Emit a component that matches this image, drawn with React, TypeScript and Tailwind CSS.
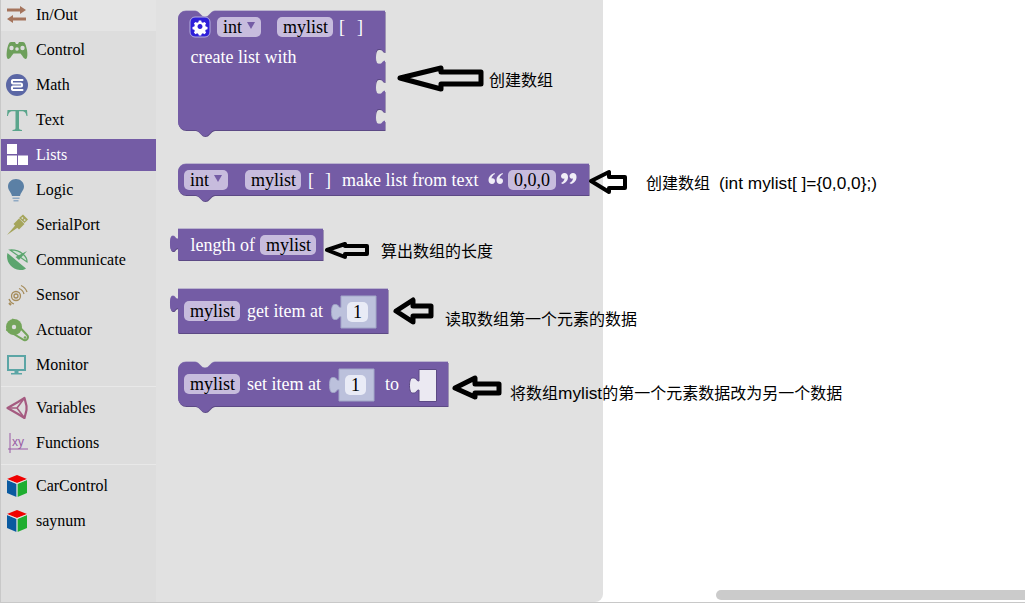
import React from "react";

const Notch = "c 2,0 3,1 4,2 l 2,2 c 1,1 2,2 4,2 s 3,-1 4,-2 l 2,-2 c 1,-1 2,-2 4,-2";
const NotchRev = "c -2,0 -3,1 -4,2 l -2,2 c -1,1 -2,2 -4,2 s -3,-1 -4,-2 l -2,-2 c -1,-1 -2,-2 -4,-2";
const Tab = "c -1.5,0 -2.5,-1 -3,-2 c -.5,-1 -2,-1 -3.5,-1 c -2,0 -3,3 -3,7.5 c 0,4.5 1,7.5 3,7.5 c 1.5,0 3,0 3.5,-1 c .5,-1 1.5,-2 3,-2";
const TabUp = "c -1.5,0 -2.5,1 -3,2 c -.5,1 -1.5,1 -2.5,1 c -1.5,0 -2.5,-3 -2.5,-7.5 c 0,-4.5 1,-7.5 2.5,-7.5 c 1,0 2,0 2.5,1 c .5,1 1.5,2 3,2";

function blockPath(o: { l: number; t: number; r: number; b: number; round?: boolean; top?: boolean; bottom?: boolean; output?: boolean; notches?: number[] }) {
  const { l, t, r, b, round, top, bottom, output, notches = [] } = o;
  let d = round ? `M ${l},${t + 8} a 8,8 0 0 1 8,-8` : `M ${l},${t}`;
  if (top) d += ` H ${l + 17} ${Notch}`;
  d += ` H ${r}`;
  notches.forEach((y) => {
    d += ` V ${y} ${Tab}`;
  });
  d += ` V ${b}`;
  if (bottom) d += ` H ${l + 37} ${NotchRev}`;
  d += round ? ` H ${l + 8} a 8,8 0 0 1 -8,-8` : ` H ${l}`;
  if (output) d += ` V ${t + 19} ${TabUp}`;
  return d + " Z";
}

function Block(p: Parameters<typeof blockPath>[0]) {
  const d = blockPath(p);
  return (
    <g>
      <path d={d} transform="translate(0.5,1)" className="fill-[#5c4985]" />
      <path d={d} transform="translate(0,-0.5)" className="fill-[#9485bb]" />
      <path d={d} className="fill-[#745ca5]" />
    </g>
  );
}

function Label({ x, y, children }: { x: number; y: number; children: React.ReactNode }) {
  return (
    <text x={x} y={y + 1} xmlSpace="preserve" className="fill-white font-['Liberation_Serif',serif] text-[18px]">
      {children}
    </text>
  );
}

function Field({ x, y, w, label, h = 20 }: { x: number; y: number; w: number; label: string; h?: number }) {
  return (
    <g>
      <rect x={x} y={y} width={w} height={h} rx={5} className="fill-[#c7bcdd]" />
      <text x={x + 6} y={y + 16} className="fill-black font-['Liberation_Serif',serif] text-[18px]">
        {label}
      </text>
    </g>
  );
}

function Dropdown({ x, y }: { x: number; y: number }) {
  return (
    <g>
      <rect x={x} y={y} width={44} height={20} rx={5} className="fill-[#c7bcdd]" />
      <text x={x + 6} y={y + 16} className="fill-black font-['Liberation_Serif',serif] text-[18px]">
        int
      </text>
      <path d={`M ${x + 30},${y + 5} h 8 l -4,7 z`} className="fill-[#745ca5]" />
    </g>
  );
}

function NumberInput({ x, top, label = "1" }: { x: number; top: number; label?: string }) {
  const d = `M ${x + 35},${top} H ${x} V ${top + 11.5} ${Tab} V ${top + 32} H ${x + 35} Z`;
  return (
    <g>
      <path d={d} className="fill-[#bcc1dc] stroke-[#a2a7c8]" />
      <rect x={x + 6} y={top + 6} width={21} height={20} rx={5} className="fill-[#e9ebf6]" />
      <text x={x + 12} y={top + 22} className="fill-black font-['Liberation_Serif',serif] text-[18px]">
        {label}
      </text>
    </g>
  );
}

function Arrow({ pts, w = 4 }: { pts: string; w?: number }) {
  return <polygon points={pts} fill="none" stroke="#000" strokeWidth={w} strokeLinejoin="round" />;
}

function Note({ x, y, children }: { x: number; y: number; children: React.ReactNode }) {
  return (
    <text
      x={x}
      y={y}
      xmlSpace="preserve"
      className="fill-black font-['Liberation_Sans','Noto_Sans_CJK_SC',sans-serif] text-[16px]"
    >
      {children}
    </text>
  );
}

const Cube = () => (
  <svg width="24" height="24" viewBox="0 0 24 24">
    <path d="M1 5 L11 1 L21 5 L11 9 Z" fill="#f00000" />
    <path d="M1 6 L10.5 10 V23 L1 19 Z" fill="#0a5aa0" />
    <path d="M11.5 10 L21 6 V19 L11.5 23 Z" fill="#1fae30" />
    <path d="M1 5.5 L11 9.5 L21 5.5 M11 9.5 V23" fill="none" stroke="#e8e8e8" strokeWidth="0.6" />
  </svg>
);

const icons: Record<string, React.ReactNode> = {
  "In/Out": (
    <svg width="24" height="24" viewBox="0 0 24 24" fill="#a5745c">
      <path d="M1 5.5 H14 V3 L20 7 L14 11 V8.5 H1 Z" />
      <path d="M20 14.5 H7 V12 L1 16 L7 20 V17.5 H20 Z" />
    </svg>
  ),
  Control: (
    <svg width="24" height="24" viewBox="0 0 24 24">
      <path
        d="M5 4 H9 L10 6 H12 L13 4 H17 C19 4 20 7 21 12 C21.6 16 21.6 20 20 21 C18 21.5 16 17 14.5 15.5 H7.5 C6 17 4 21.5 2 21 C0.4 20 0.4 16 1 12 C2 7 3 4 5 4 Z"
        fill="#6d9f5b"
      />
      <circle cx="5.5" cy="10" r="2.2" fill="#dddddd" />
      <circle cx="16.5" cy="10" r="2.2" fill="#dddddd" />
      <circle cx="11" cy="11" r="1.8" fill="#dddddd" />
    </svg>
  ),
  Math: (
    <svg width="24" height="24" viewBox="0 0 24 24">
      <circle cx="11" cy="12" r="11" fill="#5b67a5" />
      <path d="M16.5 7 H7 C5.5 7 5.5 10.5 7 10.5 H15 M15 10.5 C16.5 10.5 16.5 13.5 15 13.5 H7 C5.5 13.5 5.5 17 7 17 H16.5" fill="none" stroke="#fff" strokeWidth="2" strokeLinecap="round" />
    </svg>
  ),
  Text: (
    <svg width="24" height="24" viewBox="0 0 24 24" fill="#5ba58c">
      <path d="M1.5 2 H21 L21.5 8 H20.5 C20 5 19 3.3 15.5 3.3 H13 V20 C13 21.6 14 21.8 16 22 V23 H6.5 V22 C8.5 21.8 9.5 21.6 9.5 20 V3.3 H7 C3.5 3.3 2.5 5 2 8 H1 Z" />
    </svg>
  ),
  Lists: (
    <svg width="24" height="24" viewBox="0 0 24 24" fill="#fff">
      <rect x="1" y="1" width="10" height="10" />
      <rect x="1" y="12.5" width="10" height="9.5" />
      <rect x="12" y="12.5" width="10" height="9.5" />
    </svg>
  ),
  Logic: (
    <svg width="24" height="24" viewBox="0 0 24 24">
      <path d="M10 1 C14.5 1 18 4.2 18 8.5 C18 12 15 14 14 18 H6 C5 14 2 12 2 8.5 C2 4.2 5.5 1 10 1 Z" fill="#5b80a5" />
      <path d="M6.5 19.5 H13.5 V21 H6.5 Z M7.5 22 H12.5 V23.5 H7.5 Z" fill="#8fa9c4" />
    </svg>
  ),
  SerialPort: (
    <svg width="24" height="24" viewBox="0 0 24 24">
      <path d="M1 22 L10 11.5 L12.5 14 Z" fill="#a5a55b" />
      <path d="M7.5 11 L13 5.5 L18.5 11 L13 16.5 Z" fill="#a5a55b" />
      <path d="M13 5 L17 1.5 L22 6.5 L18.5 10 Z" fill="#a5a55b" />
      <rect x="15.5" y="4" width="1.6" height="1.6" fill="#dddddd" transform="rotate(45 16 5)" />
      <rect x="18" y="6.5" width="1.6" height="1.6" fill="#dddddd" transform="rotate(45 19 7)" />
    </svg>
  ),
  Communicate: (
    <svg width="24" height="24" viewBox="0 0 24 24" fill="#5ba56e">
      <path d="M1.5 5 C-0.5 12 4 21 14 22 C17 22.3 19 21.5 20 20.5 L11 13 Z" />
      <path d="M4 2 L21 14 C21.5 9 15 1.5 4 2 Z" fill="#cfe0d4" stroke="#5ba56e" strokeWidth="1.2" />
      <path d="M21 3 L13 12 L9.5 9 Z" />
    </svg>
  ),
  Sensor: (
    <svg width="24" height="24" viewBox="0 0 24 24" fill="none" stroke="#a58c5b" strokeWidth="1.3">
      <circle cx="10" cy="13" r="2" />
      <circle cx="10" cy="13" r="4.5" />
      <path d="M13 5.5 A8 8 0 0 1 18 11 M15 2.5 A11 11 0 0 1 21 9" />
      <path d="M3 16 A8 8 0 0 0 8 21" />
      <path d="M3 20 L5 22" strokeWidth="2" />
    </svg>
  ),
  Actuator: (
    <svg width="24" height="24" viewBox="0 0 24 24">
      <path d="M7 2 L21 17 A3 3 0 0 1 18 22 L1 12 Z" fill="none" stroke="#74a55b" strokeWidth="2" />
      <circle cx="8" cy="9" r="8" fill="#74a55b" />
      <circle cx="8" cy="9" r="2.2" fill="#dddddd" />
      <circle cx="19" cy="19.5" r="1.3" fill="#74a55b" />
    </svg>
  ),
  Monitor: (
    <svg width="24" height="24" viewBox="0 0 24 24">
      <path d="M1 2 H20 V18 H1 Z M3 4 V16 H18 V4 Z" fill="#5ba5a5" fillRule="evenodd" />
      <path d="M8.5 18 H12.5 V20 H16 V21.5 H5 V20 H8.5 Z" fill="#5ba5a5" />
    </svg>
  ),
  Variables: (
    <svg width="24" height="24" viewBox="0 0 24 24" fill="none" stroke="#a55b80" strokeWidth="2.2" strokeLinejoin="round">
      <path d="M1.5 12 L12 6 L18.5 2 L20.5 10 V14 L18.5 22 L12 18 Z" />
      <path d="M2 12 H11 L18.5 2 M11 12 L18.5 22" strokeWidth="1.6" />
    </svg>
  ),
  Functions: (
    <svg width="24" height="24" viewBox="0 0 24 24">
      <path d="M4 2 V22 M2 18 H22" stroke="#995ba5" strokeWidth="1" fill="none" />
      <text x="6" y="15" fill="#995ba5" className="font-['Liberation_Sans',sans-serif] text-[12px]">
        xy
      </text>
    </svg>
  ),
  CarControl: <Cube />,
  saynum: <Cube />,
};

function Row({ name, active }: { name: string; active?: boolean }) {
  const tone = active ? "bg-[#745ca5] text-white" : name === "In/Out" ? "bg-[#e4e4e4] text-black" : "text-black";
  return (
    <div className={`mb-[3px] flex h-[32px] items-center pl-[5px] font-['Liberation_Serif',serif] text-[16px] ${tone}`}>
      <span className="flex h-6 w-6 shrink-0 items-center justify-center">{icons[name]}</span>
      <span className="ml-[6px]">{name}</span>
    </div>
  );
}

const Sep = () => <div className="mb-[5px] mt-[5px] h-px bg-[#e8e8e8]" />;

export default function App() {
  return (
    <div className="relative flex h-[606px] w-[1025px] flex-col overflow-hidden bg-white">
      <div className="flex h-[602px] shrink-0">
        <div className="-mt-px w-[156px] shrink-0 border-l border-[#c8c8c8] bg-[#dddddd]">
          {["In/Out", "Control", "Math", "Text"].map((n) => (
            <Row key={n} name={n} />
          ))}
          <Row name="Lists" active />
          {["Logic", "SerialPort", "Communicate", "Sensor", "Actuator", "Monitor"].map((n) => (
            <Row key={n} name={n} />
          ))}
          <Sep />
          <Row name="Variables" />
          <Row name="Functions" />
          <Sep />
          <Row name="CarControl" />
          <Row name="saynum" />
        </div>
        <div className="w-[447px] shrink-0 rounded-br-lg bg-[#e1e1e1]" />
      </div>
      <div className="h-px bg-[#c8c8c8]" />

      <svg width="1025" height="606" viewBox="0 0 1025 606" className="absolute left-0 top-0">
        {/* create list */}
        <Block l={178} t={11} r={385} b={130} round top bottom notches={[52, 82, 112]} />
        <rect x={190} y={17} width={20} height={20} rx={5} fill="#2e1fd9" stroke="#b5aee0" strokeWidth="1" />
        <g fill="#fff">
          <path
            fillRule="evenodd"
            d="M198.8 21 h2.4 l.4 1.7 1.3 .6 1.6 -.9 1.6 1.7 -.9 1.5 .5 1.3 1.8 .5 v2.4 l-1.8 .4 -.5 1.3 .9 1.6 -1.6 1.6 -1.6 -.9 -1.3 .6 -.4 1.6 h-2.4 l-.4 -1.6 -1.3 -.6 -1.6 .9 -1.6 -1.6 .9 -1.6 -.5 -1.3 -1.8 -.4 v-2.4 l1.8 -.5 .5 -1.3 -.9 -1.5 1.6 -1.7 1.6 .9 1.3 -.6 z M200 24.5 a 2.5 2.5 0 1 0 .01 0 z"
            transform="translate(0,-.5)"
          />
        </g>
        <Dropdown x={217} y={17} />
        <Field x={277} y={17} w={56} label="mylist" />
        <Label x={339} y={32}>[</Label>
        <Label x={357} y={32}>]</Label>
        <Label x={190.5} y={62}>create list with</Label>

        {/* make list from text */}
        <Block l={178} t={164} r={589} b={195} round bottom />
        <Dropdown x={184} y={170} />
        <Field x={245} y={170} w={56} label="mylist" />
        <Label x={308} y={185}>[</Label>
        <Label x={325} y={185}>]</Label>
        <Label x={342} y={185}>make list from text</Label>
        <g className="fill-[#f0edf7]">
          <path d="M494.5 173 C490.5 174.5 488.5 177 488.5 180 C488.5 182.5 490 184 492 184 C494 184 495 182.5 495 181 C495 179 493.5 178 491.5 178.5 C491.8 176.5 493 175 495 174 Z" />
          <path d="M502.5 173 C498.5 174.5 496.5 177 496.5 180 C496.5 182.5 498 184 500 184 C502 184 503 182.5 503 181 C503 179 501.5 178 499.5 178.5 C499.8 176.5 501 175 503 174 Z" />
          <path d="M562.5 184 C566.5 182.5 568 180 568 177 C568 174.5 566.5 173 564.5 173 C562.5 173 561 174.5 561 176 C561 178 562.5 179 564.5 178.5 C564.2 180.5 563 182 561 183 Z" />
          <path d="M571 184 C575 182.5 576.5 180 576.5 177 C576.5 174.5 575 173 573 173 C571 173 569.5 174.5 569.5 176 C569.5 178 571 179 573 178.5 C572.7 180.5 571.5 182 569.5 183 Z" />
        </g>
        <Field x={508} y={170} w={48} label="0,0,0" />

        {/* length of */}
        <Block l={178} t={229} r={323} b={260} output />
        <Label x={190.5} y={250}>length of</Label>
        <Field x={260} y={235} w={56} label="mylist" />

        {/* get item */}
        <Block l={178} t={289} r={388} b={333} output />
        <Field x={184} y={301} w={56} label="mylist" />
        <Label x={247} y={316}>get item at</Label>
        <NumberInput x={341} top={296} />

        {/* set item */}
        <Block l={178} t={362} r={448} b={406} round top bottom />
        <Field x={184} y={374} w={56} label="mylist" />
        <Label x={247} y={389}>set item at</Label>
        <NumberInput x={339} top={369} />
        <Label x={385} y={389}>to</Label>
        <path
          d={`M 436.5,369.5 H 419 V 381 ${Tab} V 401.5 H 436.5 Z`}
          className="fill-[#ebe9f2] stroke-[#5c4985]"
        />

        {/* annotation arrows */}
        <Arrow pts="400,78 441,68 441,72 481,72 481,84 441,84 441,89" w={5} />
        <Arrow pts="591,181 609,172 609,177 625,177 625,188 609,188 609,192" w={4} />
        <Arrow pts="327,250 345,244 345,246 367,246 367,254 345,254 345,257" w={4} />
        <Arrow pts="396,311 413,300 413,306 431,306 431,316 413,316 413,322" w={5} />
        <Arrow pts="455,388 475,378 475,384 499,384 499,393 475,393 475,397" w={5} />

        {/* annotation text */}
        <Note x={489} y={86}>创建数组</Note>
        <Note x={646} y={189}>
          创建数组
          <tspan x={719} className="text-[17.3px]">(int mylist[ ]={"{0,0,0};"})</tspan>
        </Note>
        <Note x={381} y={257}>算出数组的长度</Note>
        <Note x={445} y={325}>读取数组第一个元素的数据</Note>
        <Note x={510} y={399}>
          将数组<tspan className="text-[17.3px]">mylist</tspan>的第一个元素数据改为另一个数据
        </Note>
      </svg>

      {/* horizontal scrollbar */}
      <div className="absolute left-[716px] top-[590px] h-[10px] w-[309px] rounded-l-[5px] bg-[#cbcbcb]" />
    </div>
  );
}
